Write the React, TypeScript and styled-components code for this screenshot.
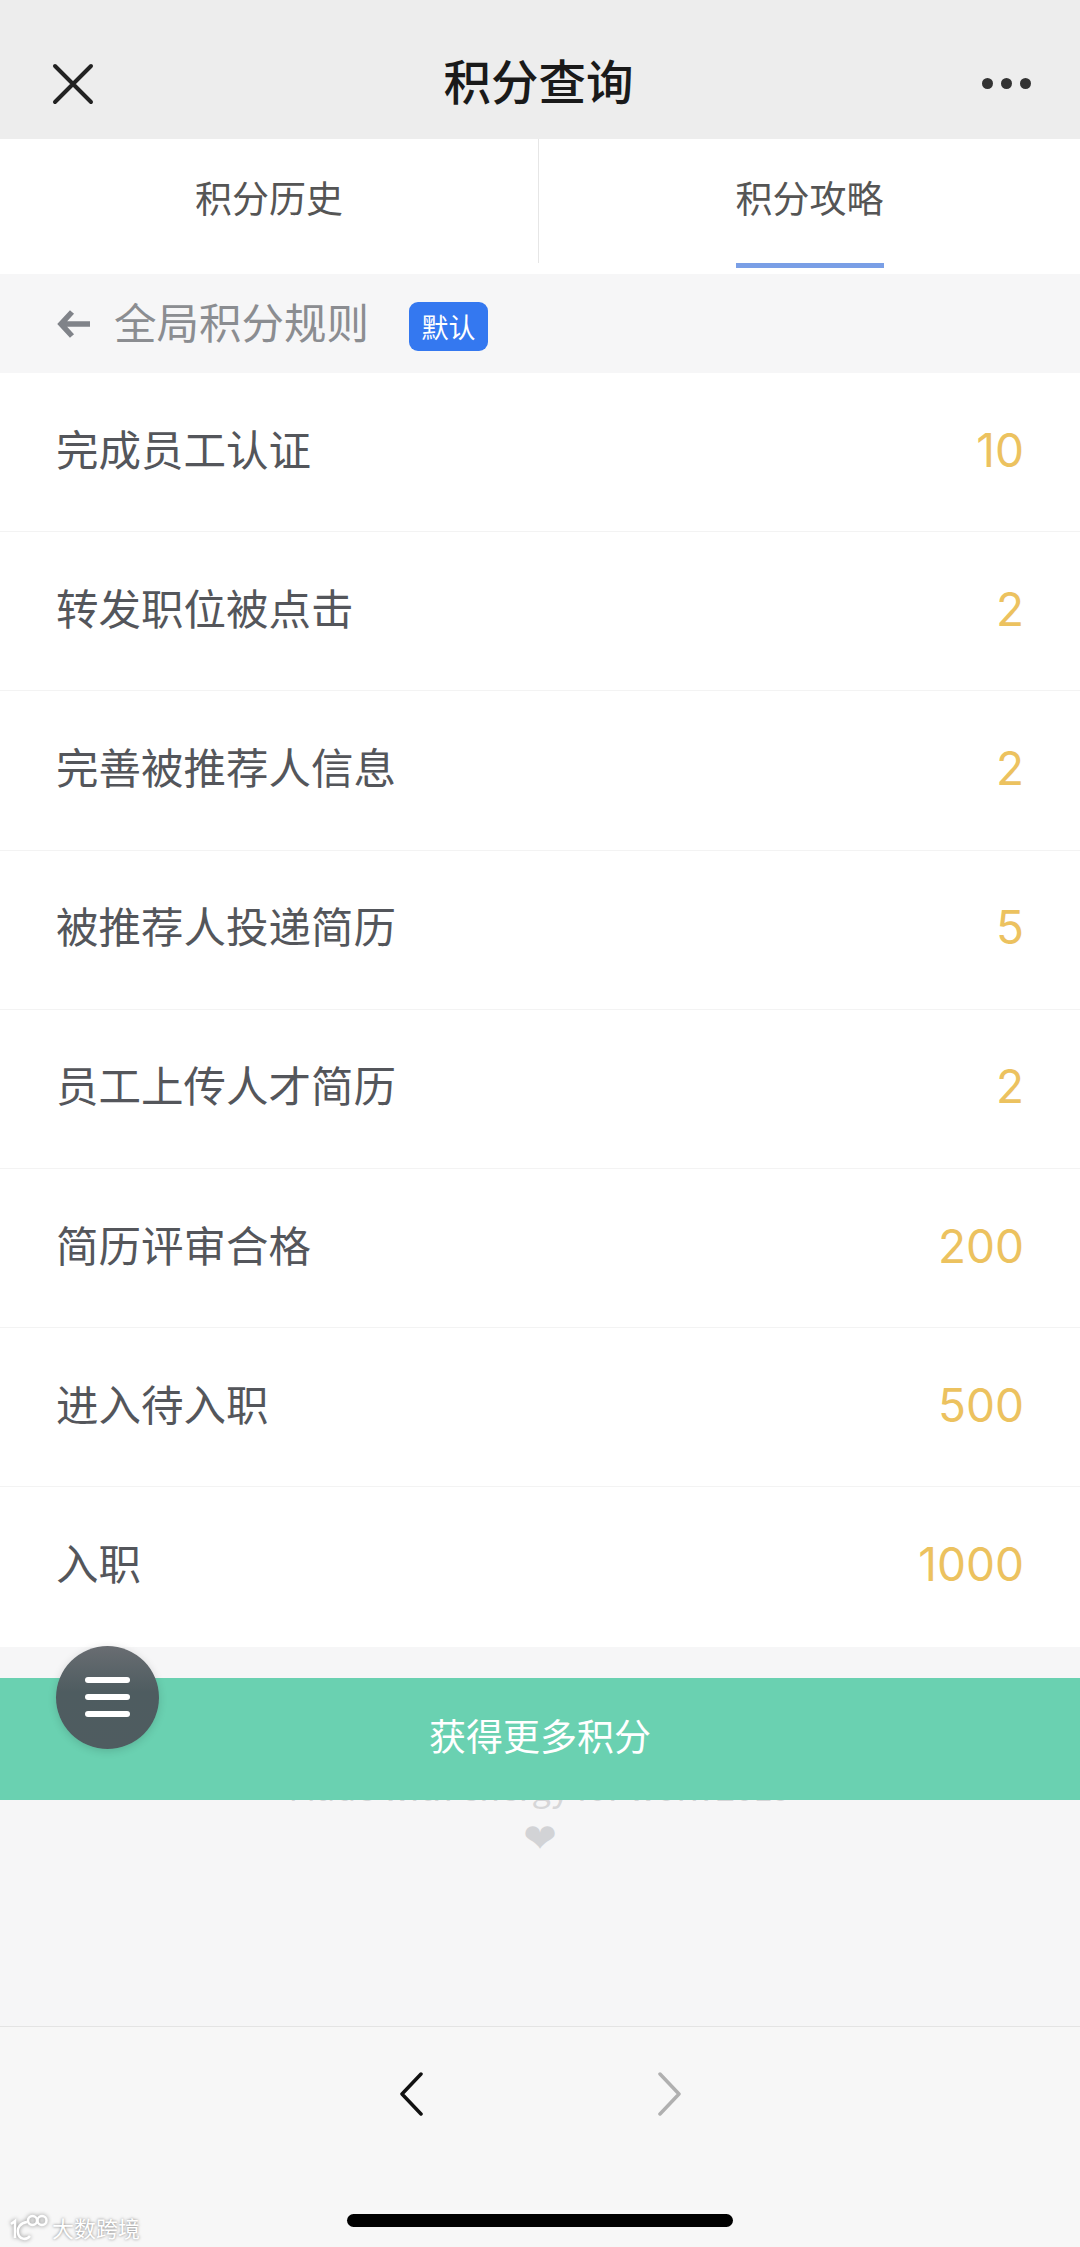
import styled, { createGlobalStyle } from "styled-components";

const rules = [
  { name: "完成员工认证", points: 10 },
  { name: "转发职位被点击", points: 2 },
  { name: "完善被推荐人信息", points: 2 },
  { name: "被推荐人投递简历", points: 5 },
  { name: "员工上传人才简历", points: 2 },
  { name: "简历评审合格", points: 200 },
  { name: "进入待入职", points: 500 },
  { name: "入职", points: 1000 },
];

const GlobalStyle = createGlobalStyle`
  html, body {
    margin: 0;
    padding: 0;
    background: #f6f6f7;
  }
  * {
    box-sizing: border-box;
  }
`;

export default function App() {
  return (
    <Page>
      <GlobalStyle />
      <NavBar>
        <svg width="44" height="44" viewBox="0 0 44 44" fill="none">
          <path d="M4 4L40 40M40 4L4 40" stroke="#222" strokeWidth="4" strokeLinecap="round" />
        </svg>
        <NavTitle>积分查询</NavTitle>
        <Dots>
          <i />
          <i />
          <i />
        </Dots>
      </NavBar>
      <Tabs>
        <Tab>
          <span>积分历史</span>
        </Tab>
        <Tab $active>
          <span>积分攻略</span>
        </Tab>
      </Tabs>
      <SubHeader>
        <svg width="34" height="30" viewBox="0 0 34 30" fill="none">
          <path d="M15 3L4 15L15 27M5 15H33" stroke="#808389" strokeWidth="5.5" />
        </svg>
        <SubTitle>全局积分规则</SubTitle>
        <Badge>默认</Badge>
      </SubHeader>
      <List>
        {rules.map((r) => (
          <Row key={r.name}>
            <RowName>{r.name}</RowName>
            <RowPoints>{r.points}</RowPoints>
          </Row>
        ))}
      </List>
      <ActionArea>
        <MenuFab>
          <i />
          <i />
          <i />
        </MenuFab>
        <ActionButton>获得更多积分</ActionButton>
      </ActionArea>
      <Credit>
        <CreditText>Made with energy for work 2019</CreditText>
        <Heart>❤</Heart>
      </Credit>
      <BottomBar>
        <svg width="24" height="44" viewBox="0 0 24 44" fill="none">
          <path d="M22 2L3 22L22 42" stroke="#111" strokeWidth="3.5" strokeLinecap="round" strokeLinejoin="round" />
        </svg>
        <svg width="24" height="44" viewBox="0 0 24 44" fill="none">
          <path d="M2 2L21 22L2 42" stroke="#b0b0b0" strokeWidth="3.5" strokeLinecap="round" strokeLinejoin="round" />
        </svg>
      </BottomBar>
      <HomeIndicator />
      <Watermark>
        <svg width="40" height="27" viewBox="0 0 40 27" fill="none" stroke="#fff" strokeWidth="2.5">
          <path d="M2 10L6 7V24" />
          <path d="M18 8C11 9 8 14 9 19C10 25 17 27 21 22" />
          <circle cx="23.500" cy="6.500" r="4.500" />
          <circle cx="33" cy="6.500" r="4.500" />
        </svg>
        <span>大数跨境</span>
      </Watermark>
    </Page>
  );
}

const Page = styled.div`
  position: relative;
  width: 1080px;
  height: 2247px;
  overflow: hidden;
  display: flex;
  flex-direction: column;
  background: #f6f6f7;
  font-family: "Noto Sans CJK SC", "Liberation Sans", sans-serif;
`;

const NavBar = styled.header`
  height: 139px;
  flex: none;
  padding: 62px 49px 0 51px;
  display: flex;
  align-items: flex-start;
  justify-content: space-between;
  background: #ededed;
`;

const NavTitle = styled.h1`
  margin: -15px 0 0 0;
  font-size: 47.5px;
  line-height: 66px;
  font-weight: 500;
  color: #1a1a1a;
`;

const Dots = styled.div`
  display: flex;
  gap: 8px;
  margin-top: 16px;

  i {
    width: 11px;
    height: 11px;
    border-radius: 50%;
    background: #333;
  }
`;

const Tabs = styled.nav`
  height: 135px;
  flex: none;
  display: flex;
  background: #fff;
`;

const Tab = styled.div<{ $active?: boolean }>`
  flex: ${(p) => (p.$active ? "1" : "0 0 538px")};
  height: 124px;
  display: flex;
  justify-content: center;
  border-left: ${(p) => (p.$active ? "1px solid #e6e6e6" : "none")};

  span {
    height: 129px;
    padding-top: 31px;
    font-size: 37px;
    line-height: 54px;
    color: #555;
    border-bottom: 5px solid ${(p) => (p.$active ? "#7a9fe6" : "transparent")};
  }
`;

const SubHeader = styled.div`
  height: 99px;
  flex: none;
  padding: 0 0 0 57px;
  display: flex;
  align-items: center;
  background: #f6f6f7;
`;

const SubTitle = styled.span`
  margin: -6px 0 0 23px;
  font-size: 42.5px;
  color: #8b8d91;
`;

const Badge = styled.span`
  margin: 6px 0 0 40px;
  width: 79px;
  height: 49px;
  display: flex;
  align-items: center;
  justify-content: center;
  border-radius: 9px;
  background: #3478f0;
  color: #fff;
  font-size: 27px;
`;

const List = styled.ul`
  margin: 0;
  padding: 0;
  list-style: none;
  flex: none;
  background: #fff;
`;

const Row = styled.li`
  height: 159.2px;
  padding: 0 56px;
  display: flex;
  align-items: center;
  justify-content: space-between;
  border-bottom: 1px solid #f3f3f3;

  &:last-child {
    border-bottom: none;
  }
`;

const RowName = styled.span`
  padding-bottom: 10px;
  font-size: 42.5px;
  color: #54565b;
`;

const RowPoints = styled.span`
  padding-bottom: 5px;
  font-family: "Inter", "Liberation Sans", sans-serif;
  font-size: 46px;
  font-weight: 400;
  color: #ecc25f;
`;

const ActionArea = styled.div`
  position: relative;
  z-index: 1;
  flex: none;
  padding-top: 31px;
`;

const ActionButton = styled.div`
  height: 122px;
  padding-bottom: 8px;
  display: flex;
  align-items: center;
  justify-content: center;
  background: #6ad1b1;
  color: #fff;
  font-size: 37px;
`;

const MenuFab = styled.div`
  position: absolute;
  z-index: 2;
  left: 56px;
  top: -1px;
  width: 103px;
  height: 103px;
  border-radius: 50%;
  display: flex;
  flex-direction: column;
  align-items: center;
  justify-content: center;
  gap: 11px;
  background: linear-gradient(#696d72, #4e5c60 45%, #4f5c60);
  box-shadow: 0 2px 8px rgba(0, 0, 0, 0.15);

  i {
    width: 45px;
    height: 6px;
    border-radius: 3px;
    background: #fff;
  }
`;

const Credit = styled.div`
  flex: 1;
  margin-top: -30px;
  display: flex;
  flex-direction: column;
  align-items: center;
`;

const CreditText = styled.div`
  font-size: 34px;
  line-height: 34px;
  white-space: nowrap;
  color: #d6d6d8;
`;

const Heart = styled.div`
  margin-top: 14px;
  font-family: "DejaVu Sans", sans-serif;
  font-size: 40px;
  line-height: 40px;
  color: #d2d3d6;
`;

const BottomBar = styled.footer`
  height: 221px;
  flex: none;
  padding-top: 45px;
  display: flex;
  align-items: flex-start;
  justify-content: center;
  gap: 235px;
  background: #f7f7f7;
  border-top: 1px solid #e4e4e4;
`;

const HomeIndicator = styled.div`
  position: absolute;
  left: 347px;
  bottom: 20px;
  width: 386px;
  height: 13px;
  border-radius: 7px;
  background: #000;
`;

const Watermark = styled.div`
  position: absolute;
  left: 9px;
  bottom: 6px;
  display: flex;
  align-items: center;
  gap: 3px;
  color: #fff;
  font-size: 22px;
  line-height: 27px;
  text-shadow: 0 0 3px rgba(0, 0, 0, 0.5);

  svg {
    filter: drop-shadow(0 0 2px rgba(0, 0, 0, 0.45));
  }
`;
